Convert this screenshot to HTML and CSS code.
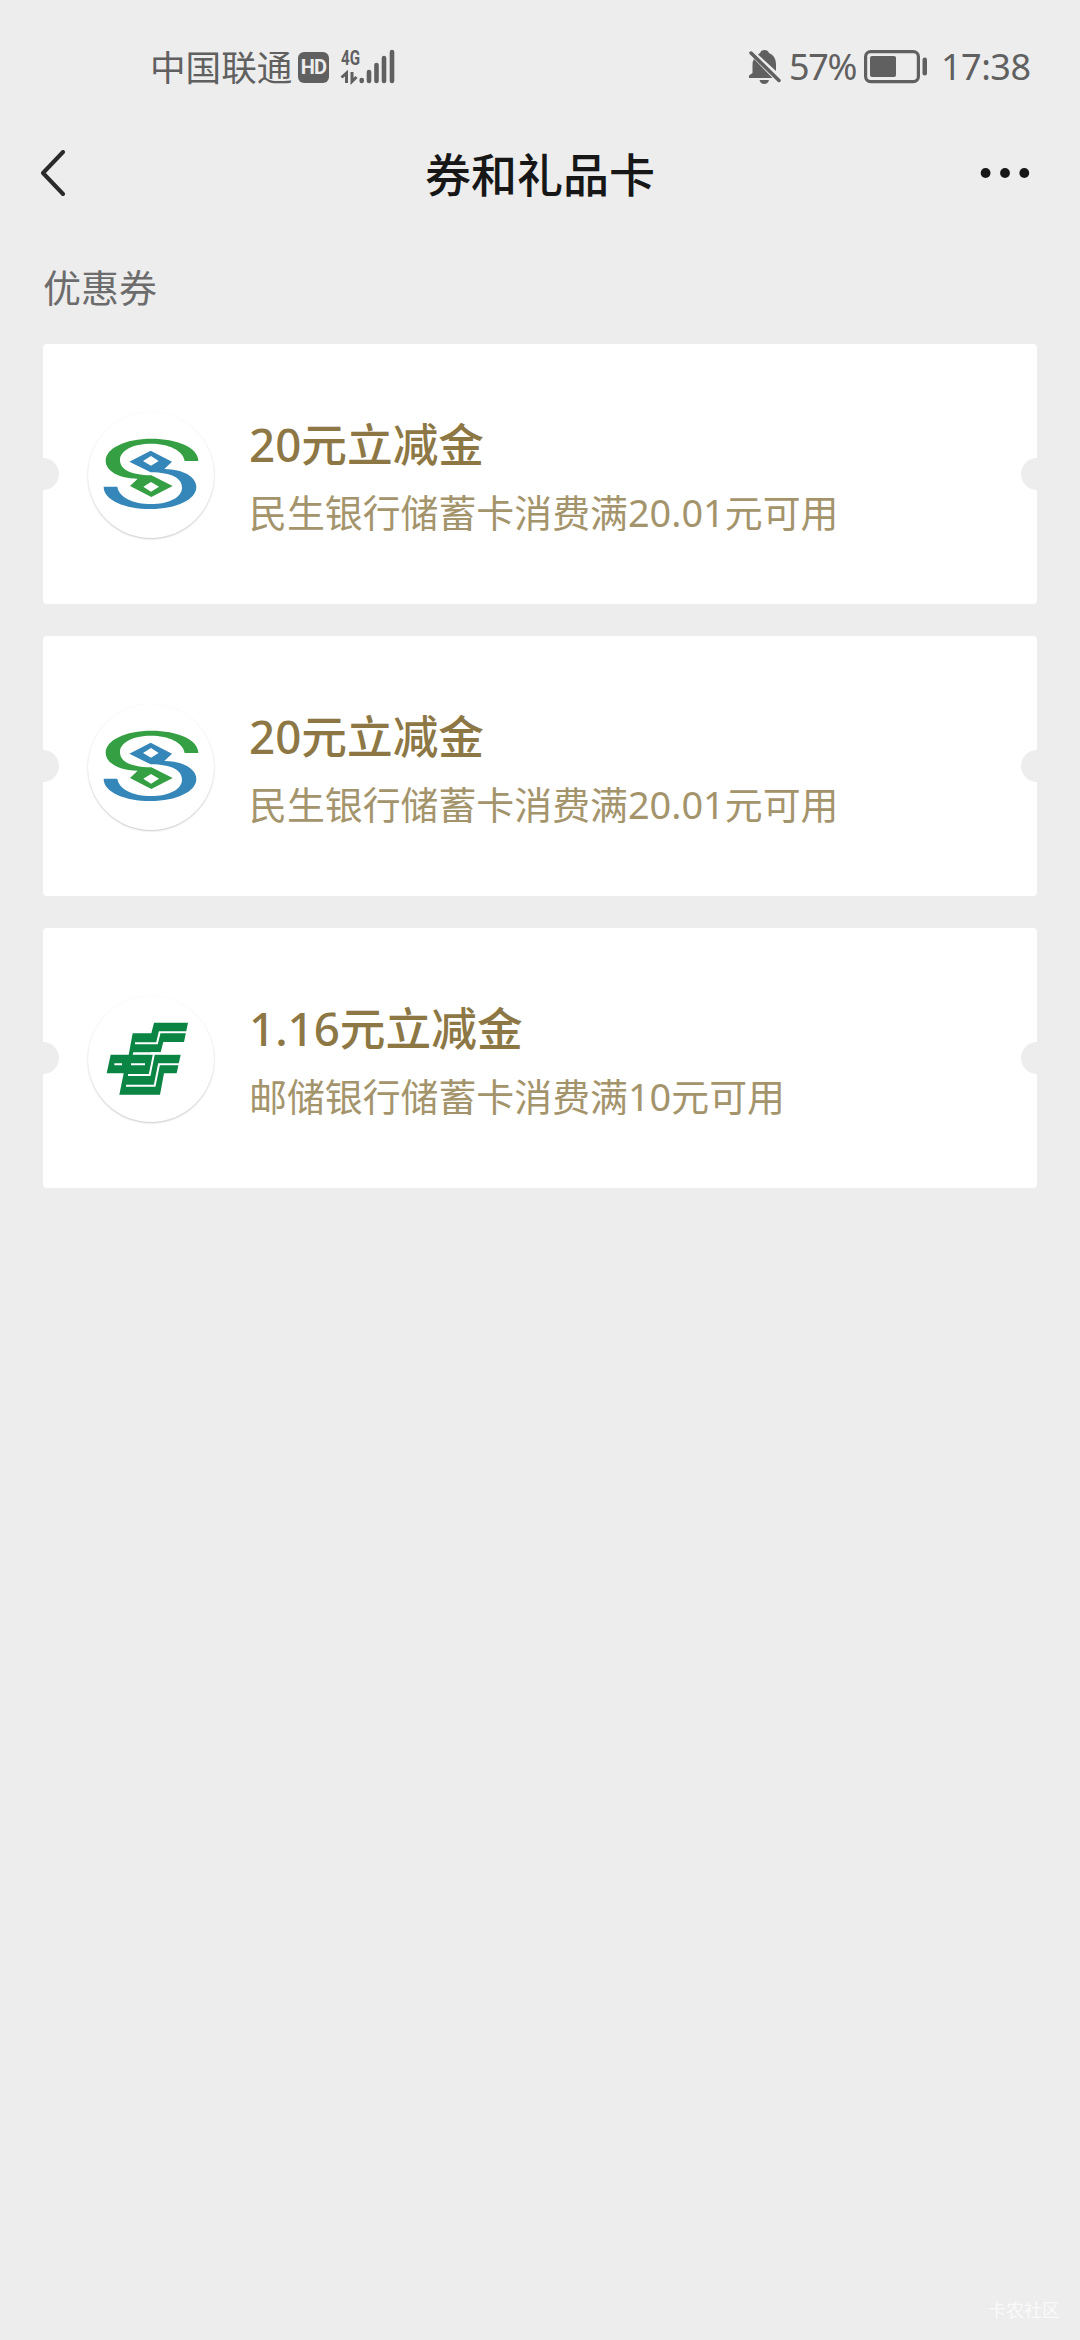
FILE: index.html
```html
<!DOCTYPE html>
<html lang="zh-CN">
<head>
<meta charset="utf-8">
<title>券和礼品卡</title>
<link rel="stylesheet" href="styles.css">
</head>
<body>
<svg class="defs" width="0" height="0" aria-hidden="true">
  <symbol id="cmbc" viewBox="24 6 378 378">
    <path fill="#34a043" fill-rule="evenodd" d="M355 153C355 112 290 86 215 86C135 86 77 115 77 152C77 182 115 205 173 206L150 228L214 261L278 228L214 196C150 195 120 178 120 150C120 121 160 101 213 101C265 101 310 121 314 153ZM190 230L213 216L237 230L213 245Z"/>
    <path fill="#3487b8" fill-rule="evenodd" transform="rotate(180 213 191.5)" d="M355 153C355 112 290 86 215 86C135 86 77 115 77 152C77 182 115 205 173 206L150 228L214 261L278 228L214 196C150 195 120 178 120 150C120 121 160 101 213 101C265 101 310 121 314 153ZM190 230L213 216L237 230L213 245Z"/>
  </symbol>
  <symbol id="psbc" viewBox="24 18 378 378">
    <path fill="#0a8543" d="M222 98H324L312 156H250L242 187H160L158 194H302L290 250H252L240 314H118L131 250H80L92 194H146L158 130H214Z"/>
    <path fill="none" stroke="#fff" stroke-width="6" d="M165 160H231L239 127H320M212 190H304M103 223H126M153 223H195M144 255H209L222 190M138 287H224L237 223H299"/>
  </symbol>
</svg>
<div class="screen">
  <header class="status">
    <span class="carrier">中国联通</span>
    <span class="hd">HD</span>
    <svg class="signal" width="56" height="46" viewBox="340 43 56 46">
      <text class="net" x="341" y="64" textLength="19" lengthAdjust="spacingAndGlyphs">4G</text>
      <path d="M341.500 76.500L346.500 72V82M356.500 76L352 80.500V71" fill="none" stroke="#606060" stroke-width="3"/>
      <path d="M361.700 79V80M369 71V80M376.500 64V80M384 57V80M392 51V80" stroke="#606060" stroke-width="4.600" stroke-linecap="round"/>
    </svg>
    <span class="gap"></span>
    <svg class="bell" width="34" height="36" viewBox="747 49 34 36">
      <path fill="#606060" d="M759 53Q760 50 763.500 50Q767 50 768 53Q775 56 775 64V71L757 54.500ZM753 59L771.500 78H748V75.500L751.500 73V65Q751.500 61 753 59ZM758.500 80H768Q767 84 763.300 84Q759.500 84 758.500 80Z"/>
      <path d="M750 53L778 80.500" stroke="#606060" stroke-width="3.500" stroke-linecap="round"/>
    </svg>
    <span class="percent">57%</span>
    <svg class="battery" width="64" height="34" viewBox="863 50 64 34">
      <rect x="864.600" y="51.600" width="52.800" height="30" rx="5" fill="none" stroke="#606060" stroke-width="3.200"/>
      <rect x="869" y="56" width="26" height="21" rx="2" fill="#606060"/>
      <rect x="921.500" y="57.500" width="4.500" height="18" rx="2.200" fill="#606060"/>
    </svg>
    <span class="time">17:38</span>
  </header>
  <nav class="navbar">
    <svg width="26" height="46" viewBox="0 0 26 46"><path d="M23 2L3 23L23 44" fill="none" stroke="#2a2a2a" stroke-width="4" stroke-linecap="round" stroke-linejoin="round"/></svg>
    <h1 class="title">券和礼品卡</h1>
    <svg class="more" width="50" height="12" viewBox="0 0 50 12"><g fill="#171717"><circle cx="5.600" cy="6" r="4.900"/><circle cx="25" cy="6" r="4.900"/><circle cx="44.300" cy="6" r="4.900"/></g></svg>
  </nav>
  <h2 class="section">优惠券</h2>
  <main class="coupons">
    <article class="coupon">
      <svg class="logo"><use href="#cmbc"/></svg>
      <div class="info">
        <h3 class="amount">20元立减金</h3>
        <p class="rule">民生银行储蓄卡消费满20.01元可用</p>
      </div>
    </article>
    <article class="coupon">
      <svg class="logo"><use href="#cmbc"/></svg>
      <div class="info">
        <h3 class="amount">20元立减金</h3>
        <p class="rule">民生银行储蓄卡消费满20.01元可用</p>
      </div>
    </article>
    <article class="coupon">
      <svg class="logo"><use href="#psbc"/></svg>
      <div class="info">
        <h3 class="amount">1.16元立减金</h3>
        <p class="rule">邮储银行储蓄卡消费满10元可用</p>
      </div>
    </article>
  </main>
  <footer class="watermark">卡农社区</footer>
</div>
</body>
</html>
```
FILE: styles.css
```css
* { box-sizing: border-box; margin: 0; padding: 0; }
body {
  background: #ededed;
  font-family: "Noto Sans", "Noto Sans CJK SC", sans-serif;
}
svg { display: block; flex: none; }
.defs { position: absolute; }
.screen {
  display: flex;
  flex-direction: column;
  width: 1080px;
  height: 2340px;
  overflow: hidden;
}
.status {
  display: flex;
  align-items: center;
  height: 134px;
  padding: 0 50px 0 150px;
  color: #606060;
  font-size: 36px;
  line-height: 50px;
  white-space: nowrap;
}
.carrier { width: 148px; font-size: 35.600px; }
.hd {
  width: 31px;
  height: 31px;
  border-radius: 6px;
  background: #606060;
  color: #ededed;
  font: 700 20px/31px "Roboto", sans-serif;
  letter-spacing: -0.8px;
  text-align: center;
}
.signal { margin-left: 11px; overflow: visible; }
.net { font: 700 20px "Roboto", sans-serif; fill: #606060; }
.gap { flex: 1; }
.percent { width: 74px; padding-left: 7px; letter-spacing: -1.3px; }
.battery { margin-left: 8px; }
.time { width: 89px; margin-left: 13px; letter-spacing: -0.5px; }
.navbar {
  display: grid;
  grid-template-columns: 1fr auto 1fr;
  align-items: center;
  height: 78px;
  padding: 0 40px;
}
.more { justify-self: end; margin-right: 10px; }
.title {
  color: #171717;
  font-size: 46px;
  font-weight: 500;
  line-height: 60px;
  padding-top: 2px;
}
.section {
  height: 132px;
  padding: 49px 43px 0;
  color: #6c6c6c;
  font-size: 38px;
  font-weight: 400;
  line-height: 52px;
}
.coupons {
  display: flex;
  flex-direction: column;
  gap: 32px;
  padding: 0 43px;
}
.coupon {
  display: flex;
  align-items: flex-start;
  height: 260px;
  padding: 68px 45px 0;
  border-radius: 4px;
  background:
    radial-gradient(circle at 0 130px, #ededed 15.500px, transparent 16.500px),
    radial-gradient(circle at 100% 130px, #ededed 15.500px, transparent 16.500px),
    #fff;
}
.logo {
  width: 126px;
  height: 126px;
  border-radius: 50%;
  box-shadow: 0 1px 2px rgba(0, 0, 0, 0.22);
}
.info { margin-left: 35px; white-space: nowrap; }
.amount {
  color: #8d7845;
  font-size: 45.700px;
  font-weight: 500;
  line-height: 64px;
}
.rule {
  margin-top: 9px;
  color: #a4946c;
  font-size: 37.900px;
  line-height: 54px;
}
.watermark {
  margin-top: auto;
  padding: 0 20px 18px 0;
  color: #fafafa;
  font-size: 18px;
  line-height: 24px;
  text-align: right;
}
```
